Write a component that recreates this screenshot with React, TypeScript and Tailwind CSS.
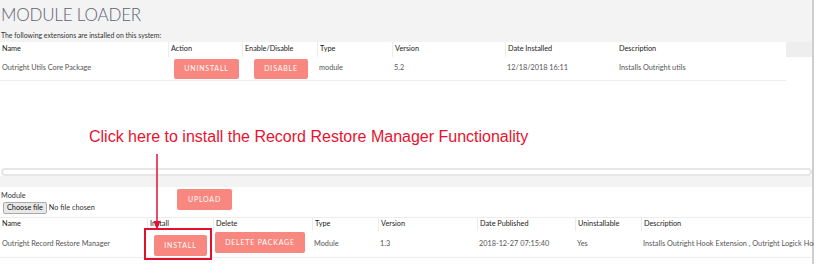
import React from 'react';

const btn =
  "flex items-center justify-center rounded-[2px] bg-[#f7877f] text-white text-[7px] tracking-[0.8px] uppercase";

function Cell({ w, children, divider = true, className = '' }: { w: string; children?: React.ReactNode; divider?: boolean; className?: string }) {
  return (
    <div className={`${w} shrink-0 flex items-center pl-[2px] ${divider ? 'border-l border-[#ececec]' : ''} ${className}`}>
      {children}
    </div>
  );
}

export default function App() {
  return (
    <div className="relative w-[817px] h-[264px] overflow-hidden bg-white font-['Lato',sans-serif] text-[7.3px] text-[#333]">
      <div className="w-[814px] h-full border-r-2 border-[#cfcfcf] flex flex-col">
        {/* heading */}
        <div className="h-[42px] bg-[#f3f3f3] flex flex-col">
          <h1 className="pt-[4px] pl-[1px] text-[17px] leading-[22px] font-light tracking-[-0.2px] text-[#5c6270]">MODULE LOADER</h1>
          <p className="mt-[5px] pl-[1px] text-[6.9px] leading-[9px] text-[#333]">The following extensions are installed on this system:</p>
        </div>

        {/* installed table */}
        <div className="flex h-[15px] bg-[#eeeeee]">
          <div className="flex w-[786px] bg-white text-[#222]">
            <Cell w="w-[168px]" divider={false}>Name</Cell>
            <Cell w="w-[74px]">Action</Cell>
            <Cell w="w-[75px]">Enable/Disable</Cell>
            <Cell w="w-[75px]">Type</Cell>
            <Cell w="w-[113px]">Version</Cell>
            <Cell w="w-[112px]">Date Installed</Cell>
            <Cell w="w-[169px]" divider={false}>Description</Cell>
          </div>
        </div>
        <div className="flex w-[786px] h-[24px] border-b border-[#ececec] text-[#555]">
          <Cell w="w-[168px]" divider={false}>Outright Utils Core Package</Cell>
          <Cell w="w-[74px]" divider={false} className="pl-[6px]">
            <div className={`${btn} w-[65px] h-[20px]`}>Uninstall</div>
          </Cell>
          <Cell w="w-[75px]" divider={false} className="pl-[12px]">
            <div className={`${btn} w-[54px] h-[20px]`}>Disable</div>
          </Cell>
          <Cell w="w-[75px]" divider={false}>module</Cell>
          <Cell w="w-[113px]" divider={false}>5.2</Cell>
          <Cell w="w-[112px]" divider={false}>12/18/2018 16:11</Cell>
          <Cell w="w-[169px]" divider={false}>Installs Outright utils</Cell>
        </div>

        {/* annotation area */}
        <div className="h-[87px] flex flex-col">
          <p className="mt-[46px] pl-[89px] font-['Liberation_Sans',Arial,sans-serif] text-[16px] leading-[19px] text-[#e8122f]">
            Click here to install the Record Restore Manager Functionality
          </p>
        </div>

        {/* scrollbar */}
        <div className="h-[8px] pl-[1px]">
          <div className="h-full rounded-full border-2 border-[#e6e6e6] bg-white" />
        </div>
        <div className="h-[11px] bg-[#f3f3f3]" />

        {/* upload */}
        <div className="h-[30px] flex">
          <div className="w-[177px] flex flex-col pl-[1px] pt-[4px]">
            <span className="leading-[10px] text-[#333]">Module</span>
            <div className="mt-[1px] pl-[2px] flex items-center gap-[2px]">
              <span className="h-[12px] px-[3px] flex items-center rounded-[2px] border border-[#a9a9a9] bg-[#e9e9e9] text-[#111]">Choose file</span>
              <span className="text-[#333]">No file chosen</span>
            </div>
          </div>
          <div className="pt-[2px]">
            <div className={`${btn} w-[55px] h-[21px]`}>Upload</div>
          </div>
        </div>

        {/* available table */}
        <div className="flex h-[14px] border-t border-[#ececec] text-[#222]">
          <Cell w="w-[147px]" divider={false}>Name</Cell>
          <Cell w="w-[66px]">Install</Cell>
          <Cell w="w-[99px]">Delete</Cell>
          <Cell w="w-[66px]">Type</Cell>
          <Cell w="w-[99px]">Version</Cell>
          <Cell w="w-[98px]">Date Published</Cell>
          <Cell w="w-[66px]">Uninstallable</Cell>
          <Cell w="w-[173px]" className="overflow-hidden whitespace-nowrap">Description</Cell>
        </div>
        <div className="flex h-[27px] border-b border-[#ececec] text-[#555]">
          <Cell w="w-[147px]" divider={false}>Outright Record Restore Manager</Cell>
          <Cell w="w-[66px]" divider={false} className="pl-[7px] pt-[3px]">
            <div className={`${btn} w-[53px] h-[21px]`}>Install</div>
          </Cell>
          <Cell w="w-[99px]" divider={false}>
            <div className={`${btn} w-[90px] h-[21px] -mt-[3px]`}>Delete Package</div>
          </Cell>
          <Cell w="w-[66px]" divider={false}>Module</Cell>
          <Cell w="w-[99px]" divider={false}>1.3</Cell>
          <Cell w="w-[98px]" divider={false}>2018-12-27 07:15:40</Cell>
          <Cell w="w-[66px]" divider={false}>Yes</Cell>
          <Cell w="w-[173px]" divider={false} className="overflow-hidden whitespace-nowrap">
            Installs Outright Hook Extension , Outright Logick Hook
          </Cell>
        </div>
      </div>

      {/* arrow annotation */}
      <svg className="absolute left-[152px] top-[153px]" width="10" height="80" viewBox="0 0 10 80">
        <line x1="5" y1="1" x2="5" y2="70" stroke="#e0123a" strokeWidth="1.5" />
        <polygon points="1.5,68 8.5,68 5,77" fill="#e0123a" />
      </svg>
      {/* highlight box */}
      <div className="absolute left-[144px] top-[228px] w-[68px] h-[32px] border-2 border-[#e0102f]" />
    </div>
  );
}
